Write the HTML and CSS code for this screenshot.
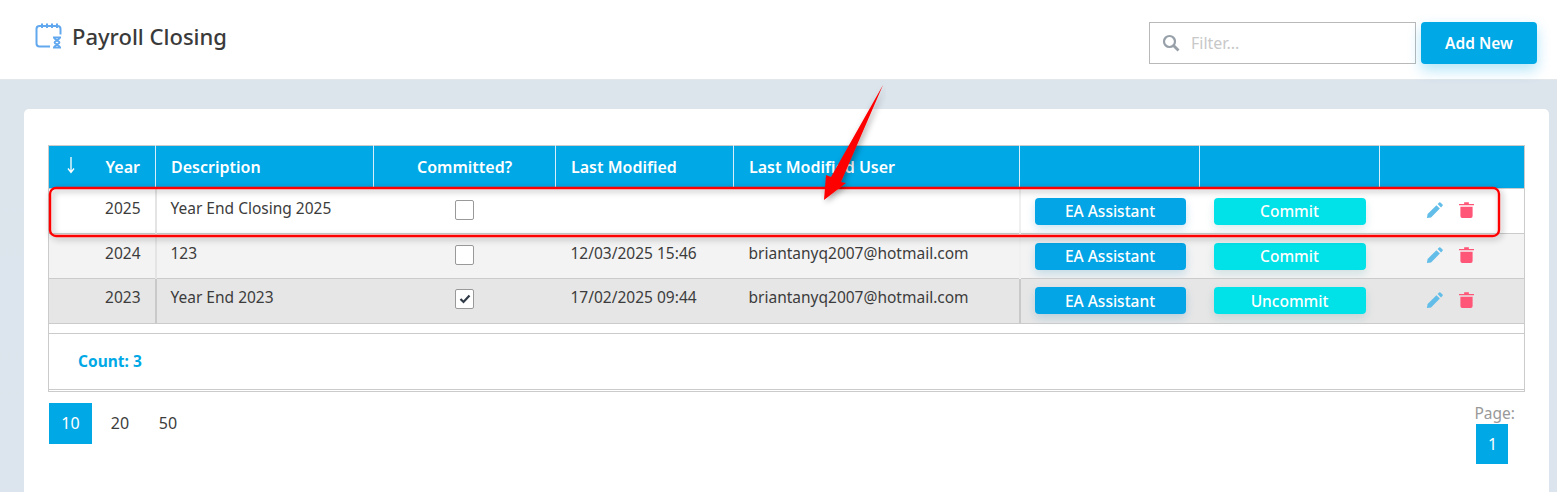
FILE: index.html
```html
<!DOCTYPE html>
<html lang="en">
<head>
<meta charset="UTF-8">
<meta name="viewport" content="width=device-width, initial-scale=1.0">
<title>Payroll Closing</title>
<link rel="stylesheet" href="styles.css">
</head>
<body>

<!-- Top Bar -->
<div class="top-bar">
  <div class="page-title">
    <svg class="title-icon" width="28" height="28" viewBox="0 0 28 28" fill="none" stroke="#62a8ee" stroke-width="2">
      <path d="M15 24.500H4.500a3 3 0 0 1-3-3V7a3 3 0 0 1 3-3h18a3 3 0 0 1 3 3v5.500" />
      <path d="M7 1.500V6M12 1.500V6M17 1.500V6M22 1.500V6" />
      <path d="M18 15.500h8M18 25.500h8M19.500 15.500c0 3 5 3.500 5 5s-5 2-5 5M24.500 15.500c0 3-5 3.500-5 5s5 2 5 5" stroke-width="1.800" />
    </svg>
    <h1 class="title">Payroll Closing</h1>
  </div>
  <div class="top-actions">
    <div class="filter">
      <svg width="18" height="18" viewBox="0 0 18 18" fill="none" stroke="#97a0a8" stroke-width="2.200">
        <circle cx="7.500" cy="7.500" r="5.500" />
        <path d="M11.500 11.500L16.500 16.500" stroke-width="2.800" />
      </svg>
      <input class="filter-input" type="text" placeholder="Filter...">
    </div>
    <button class="btn-add">Add New</button>
  </div>
</div>

<!-- Main Card -->
<div class="content">
  <div class="card">
    <table class="grid">
      <thead>
        <tr>
          <th class="col-year">
            <div class="year-head">
              <svg width="10" height="18" viewBox="0 0 10 18" fill="none" stroke="#fff" stroke-width="1.300"><path d="M5 1V16M2 12.500L5 16.500L8 12.500" /></svg>
              <span>Year</span>
            </div>
          </th>
          <th class="col-desc">Description</th>
          <th class="col-commit center">Committed?</th>
          <th class="col-date">Last Modified</th>
          <th class="col-user">Last Modified User</th>
          <th class="col-btn"></th>
          <th class="col-btn"></th>
          <th class="col-tools"></th>
        </tr>
      </thead>
      <tbody>
        <tr>
          <td class="year">2025</td>
          <td>Year End Closing 2025</td>
          <td class="center"><span class="check"></span></td>
          <td></td>
          <td></td>
          <td class="cell-btn"><button class="btn-row btn-blue">EA Assistant</button></td>
          <td class="cell-btn"><button class="btn-row btn-cyan">Commit</button></td>
          <td class="cell-tools">
            <svg class="icon-edit" width="18" height="18" viewBox="0 0 20 20" fill="#62bde8"><path d="M1 19l.8-4.600L11.600 4.600l3.800 3.800-9.800 9.800zM12.900 3.300l1.700-1.700a1 1 0 0 1 1.400 0l2.400 2.400a1 1 0 0 1 0 1.400l-1.700 1.700z" /></svg>
            <svg class="icon-trash" width="15" height="17" viewBox="0 0 16 18" fill="#ff5577"><path d="M0 3h5.500V1.200h5V3H16v1.500H0zM1.500 6h13v10a2 2 0 0 1-2 2h-9a2 2 0 0 1-2-2z" /></svg>
          </td>
        </tr>
        <tr class="row-even">
          <td class="year">2024</td>
          <td>123</td>
          <td class="center"><span class="check"></span></td>
          <td>12/03/2025 15:46</td>
          <td>briantanyq2007@hotmail.com</td>
          <td class="cell-btn"><button class="btn-row btn-blue">EA Assistant</button></td>
          <td class="cell-btn"><button class="btn-row btn-cyan">Commit</button></td>
          <td class="cell-tools">
            <svg class="icon-edit" width="18" height="18" viewBox="0 0 20 20" fill="#62bde8"><path d="M1 19l.8-4.600L11.600 4.600l3.800 3.800-9.800 9.800zM12.900 3.300l1.700-1.700a1 1 0 0 1 1.400 0l2.400 2.400a1 1 0 0 1 0 1.400l-1.700 1.700z" /></svg>
            <svg class="icon-trash" width="15" height="17" viewBox="0 0 16 18" fill="#ff5577"><path d="M0 3h5.500V1.200h5V3H16v1.500H0zM1.500 6h13v10a2 2 0 0 1-2 2h-9a2 2 0 0 1-2-2z" /></svg>
          </td>
        </tr>
        <tr class="row-odd">
          <td class="year">2023</td>
          <td>Year End 2023</td>
          <td class="center">
            <span class="check">
              <svg width="12" height="10" viewBox="0 0 12 10" fill="none" stroke="#2f3a46" stroke-width="2.200"><path d="M1.500 5L4.500 8L10.500 1.500" /></svg>
            </span>
          </td>
          <td>17/02/2025 09:44</td>
          <td>briantanyq2007@hotmail.com</td>
          <td class="cell-btn"><button class="btn-row btn-blue">EA Assistant</button></td>
          <td class="cell-btn"><button class="btn-row btn-cyan">Uncommit</button></td>
          <td class="cell-tools">
            <svg class="icon-edit" width="18" height="18" viewBox="0 0 20 20" fill="#62bde8"><path d="M1 19l.8-4.600L11.600 4.600l3.800 3.800-9.800 9.800zM12.900 3.300l1.700-1.700a1 1 0 0 1 1.400 0l2.400 2.400a1 1 0 0 1 0 1.400l-1.700 1.700z" /></svg>
            <svg class="icon-trash" width="15" height="17" viewBox="0 0 16 18" fill="#ff5577"><path d="M0 3h5.500V1.200h5V3H16v1.500H0zM1.500 6h13v10a2 2 0 0 1-2 2h-9a2 2 0 0 1-2-2z" /></svg>
          </td>
        </tr>
      </tbody>
    </table>

    <div class="grid-spacer"></div>
    <div class="grid-footer">Count: 3</div>

    <div class="pager-row">
      <div class="page-sizes">
        <span class="page-btn active">10</span>
        <span class="page-btn">20</span>
        <span class="page-btn">50</span>
      </div>
      <div class="page-nav">
        <span class="page-label">Page:</span>
        <span class="page-num">1</span>
      </div>
    </div>
  </div>
</div>

<!-- Red annotation drawn over the screenshot -->
<svg class="annotation" width="1557" height="492" viewBox="0 0 1557 492" fill="none">
  <defs>
    <filter id="soft" x="-5%" y="-30%" width="110%" height="160%">
      <feDropShadow dx="2" dy="2" stdDeviation="3" flood-color="#000" flood-opacity="0.35" />
    </filter>
  </defs>
  <rect x="50" y="188" width="1449" height="48" rx="6" stroke="#f00" stroke-width="2.400" filter="url(#soft)" />
  <path d="M883 85L841 182L846 183L824 200L826 175L831 177Z" fill="#f00" filter="url(#soft)" />
</svg>

</body>
</html>
```

FILE: styles.css
```css
body {
  margin: 0;
  height: 492px;
  overflow: hidden;
  position: relative;
  background-color: #dde5ed;
  font-family: "Noto Sans", "Open Sans", sans-serif;
  font-size: 15.500px;
  color: #3c3c3c;
}

.top-bar {
  height: 80px;
  box-sizing: border-box;
  display: flex;
  justify-content: space-between;
  background-color: #fff;
  border-bottom: 1px solid #e3e7ea;
  padding: 22px 20px 0 35px;
}

.page-title {
  display: flex;
  align-items: flex-start;
  gap: 9px;
}

.title {
  font-size: 22px;
  font-weight: 500;
  line-height: 30px;
  margin: -1px 0 0;
  color: #3a3a3a;
}

.top-actions {
  display: flex;
  align-items: flex-start;
  gap: 5px;
}

.filter {
  width: 267px;
  height: 42px;
  box-sizing: border-box;
  border: 1px solid #b9b9b9;
  display: flex;
  align-items: center;
  gap: 11px;
  padding-left: 12px;
  background-color: #fff;
}

.filter-input {
  border: none;
  outline: none;
  padding: 0;
  width: 200px;
  font-family: inherit;
  font-size: 16px;
}

.filter-input::placeholder {
  color: #c8c8c8;
}

.btn-add {
  width: 116px;
  height: 42px;
  border: none;
  border-radius: 4px;
  background-color: #00a8e6;
  color: #fff;
  font-family: inherit;
  font-size: 15.500px;
  font-weight: 600;
  box-shadow: 0 6px 14px rgba(3, 169, 232, 0.3);
}

.content {
  padding: 29px 8px 0 24px;
  background: linear-gradient(#dce4ec, #dce5ed);
}

.card {
  background-color: #fff;
  border-radius: 5px 5px 0 0;
  padding: 36px 24px 0 24px;
  height: 383px;
  box-sizing: border-box;
}

.grid {
  width: 1477px;
  border-collapse: collapse;
  table-layout: fixed;
  border: 1px solid #cbcbcb;
}

.grid th {
  height: 43px;
  padding: 0 15px;
  box-sizing: border-box;
  background-color: #00a8e6;
  color: #fff;
  font-size: 16px;
  font-weight: 600;
  text-align: left;
  border-left: 1px solid #d5eefa;
}

.grid th:first-child {
  border-left: none;
}

.grid td {
  height: 45px;
  padding: 0 15px 7px;
  box-sizing: border-box;
  border-top: 1px solid #cbcbcb;
  font-size: 15.500px;
  vertical-align: middle;
}

.grid td:nth-child(2) {
  border-left: 2px solid #e4e4e4;
  padding-left: 14px;
}

.grid td:nth-child(6) {
  border-left: 2px solid #f0f0f0;
}

.col-year { width: 107px; }
.col-desc { width: 218px; }
.col-commit { width: 182px; }
.col-date { width: 178px; }
.col-user { width: 286px; }
.col-btn { width: 180px; }

.year-head {
  display: flex;
  justify-content: space-between;
  align-items: center;
}

.year-head svg {
  margin-left: 2px;
  margin-top: -4px;
}

.grid .year {
  text-align: right;
  padding-right: 14px;
}

.grid .center {
  text-align: center;
}

.row-even td {
  background-color: #f3f3f3;
}

.row-odd td {
  background-color: #e6e6e6;
  padding-bottom: 9px;
}

.row-odd td:nth-child(2),
.row-odd td:nth-child(6) {
  border-left-color: #c9c9c9;
}

.check {
  width: 17px;
  height: 18px;
  border: 1px solid #999;
  border-radius: 2px;
  background-color: #fff;
  display: inline-flex;
  align-items: center;
  justify-content: center;
  vertical-align: middle;
  margin-top: 4px;
}

.grid .cell-btn {
  padding: 0 0 0 14px;
}

.grid .row-odd .cell-btn {
  padding-bottom: 1px;
}

.btn-row {
  width: 151px;
  height: 27px;
  display: block;
  border: none;
  border-radius: 4px;
  color: #fff;
  font-family: inherit;
  font-size: 15.500px;
  font-weight: 500;
  padding: 0;
}

.btn-blue {
  background-color: #03a5e6;
  box-shadow: 0 4px 10px rgba(3, 120, 180, 0.2);
}

.btn-cyan {
  width: 152px;
  background-color: #00e2e8;
  box-shadow: 0 4px 10px rgba(0, 120, 130, 0.15);
}

.grid .cell-tools {
  padding: 0 0 6px 46px;
}

.cell-tools svg {
  vertical-align: middle;
}

.icon-edit {
  margin-right: 11px;
}

.grid-spacer {
  height: 9px;
  width: 1477px;
  border-left: 1px solid #cbcbcb;
  border-right: 1px solid #cbcbcb;
  box-sizing: border-box;
}

.grid-footer {
  width: 1477px;
  height: 59px;
  box-sizing: border-box;
  border: 1px solid #cbcbcb;
  border-bottom: 3px double #cbcbcb;
  padding: 17px 0 0 29px;
  color: #00a8e6;
  font-weight: 700;
  font-size: 15.500px;
  line-height: 20px;
}

.pager-row {
  width: 1475px;
  display: flex;
  justify-content: space-between;
  margin: 11px 0 0 1px;
}

.page-sizes {
  display: flex;
  align-items: flex-start;
}

.page-btn {
  width: 48px;
  height: 41px;
  line-height: 40px;
  text-align: center;
  font-size: 16px;
}

.page-btn.active {
  width: 43px;
  margin-right: 4px;
  background-color: #00a8e6;
  color: #fff;
}

.page-nav {
  display: flex;
  flex-direction: column;
  align-items: flex-start;
  margin-right: 9px;
  margin-top: -1px;
}

.page-label {
  color: #999;
  font-size: 15.500px;
  line-height: 22px;
  margin-left: -2px;
}

.page-num {
  width: 32px;
  height: 40px;
  line-height: 40px;
  text-align: center;
  background-color: #00a8e6;
  color: #fff;
  font-size: 16px;
}

.annotation {
  position: absolute;
  top: 0;
  left: 0;
  pointer-events: none;
}
```
